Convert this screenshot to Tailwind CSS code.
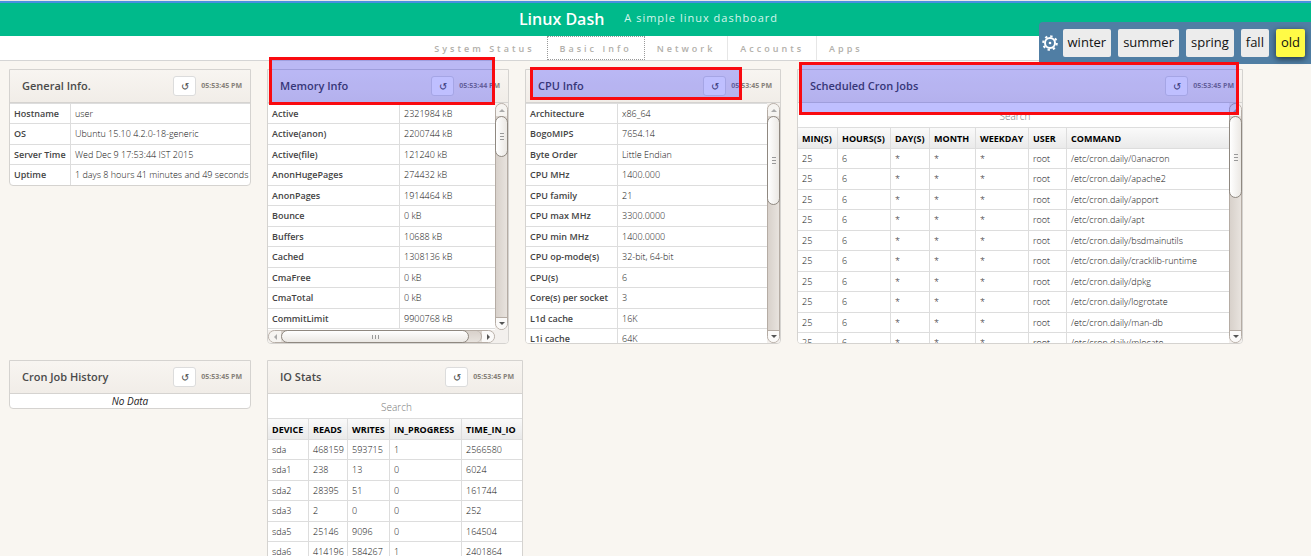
<!DOCTYPE html>
<html lang="en">

<head>
  <meta charset="UTF-8" />
  <meta name="viewport" content="width=device-width, initial-scale=1.0" />
  <script src="https://cdn.jsdelivr.net/npm/@tailwindcss/browser@4"></script>
  <title>Linux Dash</title>
</head>

<body class="bg-[#f9f6f1] font-['Open_Sans','Noto_Sans',sans-serif] overflow-hidden">
  <!-- Top bar -->
  <header class="relative">
    <div class="h-[3px] bg-[#e8e8e8] border-b-2 border-[#4a8fe0]"></div>
    <div class="h-[33px] bg-[#00ba8b] flex items-center justify-center gap-5 pb-[2px] pr-[14px] text-white">
      <h1 class="text-base font-semibold">Linux Dash</h1>
      <small class="text-[11px] tracking-[1px] text-[#d5f5ec]">A simple linux dashboard</small>
    </div>
    <nav class="h-[25px] bg-white border-b border-[#d5d5d5] flex justify-center pr-[14px] text-[9px] leading-[26px] tracking-[3px] font-semibold text-[#b2afaa]">
      <a href="#system-status" class="px-3">System Status</a>
      <a href="#basic-info" class="px-3 border border-dotted border-[#999] leading-6">Basic Info</a>
      <a href="#network" class="px-3 border-r border-[#e6e6e6]">Network</a>
      <a href="#accounts" class="px-3 border-r border-[#e6e6e6]">Accounts</a>
      <a href="#apps" class="px-3">Apps</a>
    </nav>

    <!-- Theme switcher -->
    <div class="absolute right-0 top-[22px] h-[42px] pl-[3px] pr-[6px] flex items-center gap-[7px] rounded-tl bg-[#507ea4] text-[13px] text-[#111]">
      <svg class="w-4 h-4 -mr-[2px]" viewBox="0 0 16 16" fill="none" stroke="#fff">
        <circle cx="8" cy="8" r="5" stroke-width="2" />
        <circle cx="8" cy="8" r="6.8" stroke-width="2" stroke-dasharray="2.4 2.94" />
        <circle cx="8" cy="8" r="1.3" fill="#fff" stroke="none" />
      </svg>
      <button class="h-7 px-[5px] rounded-xs bg-[#ececec]">winter</button>
      <button class="h-7 px-[5px] rounded-xs bg-[#ececec]">summer</button>
      <button class="h-7 px-[5px] rounded-xs bg-[#ececec]">spring</button>
      <button class="h-7 px-[5px] rounded-xs bg-[#ececec]">fall</button>
      <button class="h-7 px-[5px] rounded-xs bg-[#fffb46] shadow-[0_2px_6px_rgba(0,0,0,0.6)]">old</button>
    </div>
  </header>

  <main id="plugins" class="flex flex-wrap items-start gap-4 pl-[9px] pr-2 pt-2"></main>

  <script>
    const plugins = [
      {
        title: "General Info.", time: "05:53:45 PM", size: "w-[242px]", cols: ["w-[61px]", ""],
        rows: [["Hostname", "user"], ["OS", "Ubuntu 15.10 4.2.0-18-generic"],
          ["Server Time", "Wed Dec 9 17:53:44 IST 2015"], ["Uptime", "1 days 8 hours 41 minutes and 49 seconds"]],
      },
      {
        title: "Memory Info", time: "05:53:44 PM", size: "w-[242px]", cols: ["w-[132px]", ""],
        body: "h-[240px]", thumb: "h-[41px]", hbar: true,
        mark: "left-[2px] -top-3 w-[226px] h-12",
        rows: [["Active", "2321984 kB"], ["Active(anon)", "2200744 kB"], ["Active(file)", "121240 kB"],
          ["AnonHugePages", "274432 kB"], ["AnonPages", "1914464 kB"], ["Bounce", "0 kB"], ["Buffers", "10688 kB"],
          ["Cached", "1308136 kB"], ["CmaFree", "0 kB"], ["CmaTotal", "0 kB"], ["CommitLimit", "9900768 kB"]],
      },
      {
        title: "CPU Info", time: "05:53:45 PM", size: "w-[256px]", cols: ["w-[92px]", ""],
        body: "h-[240px]", thumb: "h-[89px]",
        mark: "left-[5px] -top-[2px] w-[212px] h-[33px]",
        rows: [["Architecture", "x86_64"], ["BogoMIPS", "7654.14"], ["Byte Order", "Little Endian"],
          ["CPU MHz", "1400.000"], ["CPU family", "21"], ["CPU max MHz", "3300.0000"], ["CPU min MHz", "1400.0000"],
          ["CPU op-mode(s)", "32-bit, 64-bit"], ["CPU(s)", "6"], ["Core(s) per socket", "3"], ["L1d cache", "16K"],
          ["L1i cache", "64K"]],
      },
      {
        title: "Scheduled Cron Jobs", time: "05:53:45 PM", size: "w-[446px]",
        cols: ["w-[40px]", "w-[53px]", "w-[39px]", "w-[46px]", "w-[53px]", "w-[38px]", ""],
        body: "h-[240px]", thumb: "h-[82px]",
        mark: "left-[2px] -top-[7px] w-[440px] h-[53px]",
        head: ["Min(s)", "Hours(s)", "Day(s)", "Month", "Weekday", "User", "Command"],
        rows: ["0anacron", "apache2", "apport", "apt", "bsdmainutils", "cracklib-runtime", "dpkg", "logrotate",
          "man-db", "mlocate"].map(job => ["25", "6", "*", "*", "*", "root", "/etc/cron.daily/" + job]),
      },
      { title: "Cron Job History", time: "05:53:45 PM", size: "w-[242px]" },
      {
        title: "IO Stats", time: "05:53:45 PM", size: "w-[256px]",
        cols: ["w-[41px]", "w-[39px]", "w-[42px]", "w-[72px]", ""],
        head: ["Device", "Reads", "Writes", "In_Progress", "Time_In_IO"],
        rows: [["sda", "468159", "593715", "1", "2566580"], ["sda1", "238", "13", "0", "6024"],
          ["sda2", "28395", "51", "0", "161744"], ["sda3", "2", "0", "0", "252"],
          ["sda5", "25146", "9096", "0", "164504"], ["sda6", "414196", "584267", "1", "2401864"]],
      },
    ];

    // Key/value tables use a row header, the others have a header row and a search box
    function tableHtml(p) {
      const cols = p.cols.map(c => `<col class="${c}">`).join("");
      const head = p.head ? `
        <thead><tr class="h-[21px] bg-linear-to-b from-[#fafafa] to-[#e9e9e9]">
          ${p.head.map(h => `<th scope="col" class="pl-1 pt-px text-left font-bold uppercase text-black border-b border-r border-[#ddd] last:border-r-0">${h}</th>`).join("")}
        </tr></thead>` : "";
      const rows = p.rows.map(r => `
        <tr class="odd:h-5 even:h-[21px]">
          ${r.map((c, i) => i === 0 && !p.head
            ? `<th scope="row" class="pl-1 text-left font-semibold text-[#444] border-b border-r border-[#ddd]">${c}</th>`
            : `<td class="pl-1 font-light text-[#111] border-b border-r border-[#ddd] last:border-r-0">${c}</td>`).join("")}
        </tr>`).join("");
      const search = p.head
        ? `<input type="text" placeholder="Search" aria-label="Search ${p.title}" class="block w-full h-6 pl-[3px] pt-px text-center text-[10px] font-light placeholder:text-[#777]">` : "";
      return `${search}
        <table class="w-full -mb-px table-fixed border-separate border-spacing-0 border-t border-[#ddd] text-[9px] leading-[18px] whitespace-nowrap">
          <colgroup>${cols}</colgroup>${head}<tbody>${rows}</tbody>
        </table>`;
    }

    function vbarHtml(p) {
      return `
        <div class="w-[13px] shrink-0 flex flex-col items-center rounded-full border border-[#b5aca4] bg-linear-to-r from-[#d8d1cb] to-[#e8e3de]">
          <div class="w-full h-3 shrink-0 flex items-center justify-center rounded-t-full bg-[#f6f4f1]">
            <svg class="w-[6px] h-[3px]" viewBox="0 0 6 3"><path d="M0 3L3 0L6 3Z" fill="#aaa" /></svg>
          </div>
          <div class="w-[13px] ${p.thumb} shrink-0 flex flex-col items-center justify-center gap-[2px] rounded-full border border-[#8f8880] bg-linear-to-r from-white to-[#ebe8e4]">
            <i class="w-1 h-px bg-[#999]"></i><i class="w-1 h-px bg-[#999]"></i><i class="w-1 h-px bg-[#999]"></i>
          </div>
          <div class="flex-1"></div>
          <div class="w-full h-3 shrink-0 flex items-center justify-center rounded-b-full border-t border-[#b5aca4] bg-[#fbfaf9]">
            <svg class="w-[6px] h-[3px]" viewBox="0 0 6 3"><path d="M0 0L3 3L6 0Z" fill="#555" /></svg>
          </div>
        </div>`;
    }

    function hbarHtml() {
      return `
        <div class="h-[13px] mr-[13px] shrink-0 flex items-center rounded-full border border-[#b5aca4] bg-linear-to-b from-[#d8d1cb] to-[#e8e3de]">
          <div class="w-3 h-full flex items-center justify-center rounded-l-full bg-[#f6f4f1]">
            <svg class="w-[3px] h-[6px]" viewBox="0 0 3 6"><path d="M3 0L0 3L3 6Z" fill="#aaa" /></svg>
          </div>
          <div class="w-[188px] h-[13px] flex items-center justify-center gap-[2px] rounded-full border border-[#8f8880] bg-linear-to-b from-white to-[#ebe8e4]">
            <i class="w-px h-1 bg-[#999]"></i><i class="w-px h-1 bg-[#999]"></i><i class="w-px h-1 bg-[#999]"></i>
          </div>
          <div class="flex-1 h-full rounded-r-full border-r border-[#b5aca4]"></div>
          <div class="w-3 h-full flex items-center justify-center rounded-r-full bg-[#fbfaf9]">
            <svg class="w-[3px] h-[6px]" viewBox="0 0 3 6"><path d="M0 0L3 3L0 6Z" fill="#555" /></svg>
          </div>
        </div>`;
    }

    function bodyHtml(p) {
      if (!p.rows) {
        return `<p class="h-[14px] text-center text-[10px] leading-[14px] italic text-[#222]">No Data</p>`;
      }
      if (!p.body) return tableHtml(p);
      return `
        <div class="${p.body} flex flex-col bg-[#f3f0ed]">
          <div class="flex-1 min-h-0 flex">
            <div class="flex-1 overflow-hidden bg-white">${tableHtml(p)}</div>
            ${vbarHtml(p)}
          </div>
          ${p.hbar ? hbarHtml() : ""}
        </div>`;
    }

    document.getElementById("plugins").innerHTML = plugins.map(p => `
      <section class="relative ${p.size}">
        <div class="overflow-hidden rounded-b-[4px] border border-[#d5d3d0] bg-white">
          <div class="h-[33px] flex items-center pl-3 pr-2 border-b border-[#d5d3d0] bg-linear-to-b from-[#f8f5f1] to-[#f1ede8]">
            <h2 class="flex-1 text-[11px] font-semibold text-[#4a4a4a]">${p.title}</h2>
            <button aria-label="Refresh" class="w-[23px] h-5 mr-1 rounded-[3px] border border-[#dcdcdc] bg-white text-[10px] leading-[18px] text-[#444]">↺</button>
            <span class="w-[42px] text-right text-[7px] font-bold whitespace-nowrap text-[#86817a]">${p.time}</span>
          </div>
          ${bodyHtml(p)}
        </div>
        ${p.mark ? `<div class="absolute ${p.mark} border-3 border-[#f90a10] bg-[#0000ff]/25"></div>` : ""}
      </section>`).join("");
  </script>
</body>

</html>
